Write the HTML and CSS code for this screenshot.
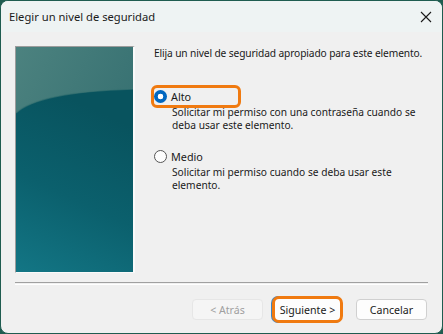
FILE: index.html
```html
<!DOCTYPE html>
<html lang="es">
<head>
    <meta charset="UTF-8">
    <title>Elegir un nivel de seguridad</title>
    <link rel="stylesheet" href="styles.css">
</head>
<body>
    <div class="window">
        <div class="titlebar">
            <span class="title">Elegir un nivel de seguridad</span>
            <svg class="close" width="12" height="12" viewBox="0 0 12 12">
                <path d="M1 1 L11 11 M11 1 L1 11" stroke="#1a1a1a" stroke-width="1.1" fill="none"/>
            </svg>
        </div>

        <div class="content">
            <div class="banner">
                <svg width="117" height="225" viewBox="0 0 117 225" preserveAspectRatio="none">
                    <defs>
                        <linearGradient id="top" x1="0" y1="0" x2="1" y2="1">
                            <stop offset="0" stop-color="#4c827f"/>
                            <stop offset="1" stop-color="#2c686b"/>
                        </linearGradient>
                        <linearGradient id="low" x1="0.3" y1="0" x2="0" y2="1">
                            <stop offset="0" stop-color="#08535e"/>
                            <stop offset="0.5" stop-color="#0b606d"/>
                            <stop offset="1" stop-color="#137685"/>
                        </linearGradient>
                    </defs>
                    <rect width="117" height="225" fill="url(#top)"/>
                    <path d="M0 66 Q22 45 117 42 L117 225 L0 225 Z" fill="url(#low)"/>
                    <path d="M0 66 Q22 45 117 42" stroke="#3d7775" stroke-width="1.5" fill="none" opacity="0.6"/>
                </svg>
            </div>

            <div class="panel">
                <p class="intro">Elija un nivel de seguridad apropiado para este elemento.</p>

                <div class="option">
                    <label class="choice marked"><span class="radio checked"></span>Alto</label>
                    <p class="desc">Solicitar mi permiso con una contraseña cuando se<br>deba usar este elemento.</p>
                </div>

                <div class="option">
                    <label class="choice"><span class="radio"></span>Medio</label>
                    <p class="desc">Solicitar mi permiso cuando se deba usar este<br>elemento.</p>
                </div>
            </div>
        </div>

        <div class="separator"></div>

        <div class="buttons">
            <button class="btn" disabled>&lt; Atrás</button>
            <button class="btn default marked">Siguiente &gt;</button>
            <button class="btn">Cancelar</button>
        </div>
    </div>
</body>
</html>
```

FILE: styles.css
```css
body {
    margin: 0;
    background-color: #1f5c50;
    font-family: "Noto Sans", sans-serif;
    font-size: 10.2px;
    color: #1a1a1a;
}
.window {
    width: 441px;
    height: 332px;
    border: 1px solid #1f5c50;
    border-radius: 8px;
    background-color: #f0f0f0;
    overflow: hidden;
    display: flex;
    flex-direction: column;
}
.titlebar {
    height: 31px;
    flex: none;
    background-color: #eef3f3;
    display: flex;
    align-items: center;
    padding: 0 10px 0 8px;
}
.title {
    flex: 1;
    font-size: 11.2px;
}
.close {
    display: block;
}
.content {
    display: flex;
    padding: 14px 0 0 14px;
}
.banner {
    width: 117px;
    height: 225px;
    border-top: 1px solid #9c9c9c;
    border-left: 1px solid #9c9c9c;
    border-right: 2px solid #fafafa;
    border-bottom: 1px solid #fafafa;
}
.banner svg {
    display: block;
}
.panel {
    padding-left: 19px;
    white-space: nowrap;
}
.intro {
    margin: 0;
    line-height: 15px;
    letter-spacing: -0.12px;
}
.option {
    margin-top: 24px;
}
.option + .option {
    margin-top: 13px;
}
.choice {
    display: flex;
    align-items: center;
    width: 84px;
    height: 17px;
    margin-left: -3px;
    border: 3px solid transparent;
    border-radius: 6px;
    font-size: 10.8px;
}
.choice.marked {
    border-color: #f07a10;
}
.radio {
    width: 11px;
    height: 11px;
    border: 1px solid #555;
    border-radius: 50%;
    background-color: #fdfdfd;
    margin-right: 4px;
}
.radio.checked {
    width: 13px;
    height: 13px;
    border: none;
    background: radial-gradient(circle, #fff 0 2.6px, #0067c0 3.1px);
}
.desc {
    margin: -2px 0 0 18px;
    line-height: 13px;
}
.separator {
    margin: 9px 14px 0 14px;
    height: 1px;
    border-top: 1px solid #a0a0a0;
    border-bottom: 1px solid #fff;
}
.buttons {
    display: flex;
    justify-content: flex-end;
    align-items: center;
    padding: 11px 15px 0 0;
}
.btn {
    width: 71px;
    height: 21px;
    padding: 0;
    margin-left: 9px;
    font-family: inherit;
    font-size: 10.6px;
    color: #1a1a1a;
    background-color: #fdfdfd;
    border: 1px solid #d0d0d0;
    border-radius: 4px;
}
.btn + .btn {
    margin-left: 13px;
}
.btn:disabled {
    color: #a0a0a0;
    background-color: #f5f5f5;
    border-color: #e6e6e6;
}
.btn.default.marked {
    width: 71px;
    height: 27px;
    margin-left: 9px;
    border: 3px solid #f07a10;
    border-radius: 7px;
    box-shadow: -1px 0 0 #3d86c6;
}
```
